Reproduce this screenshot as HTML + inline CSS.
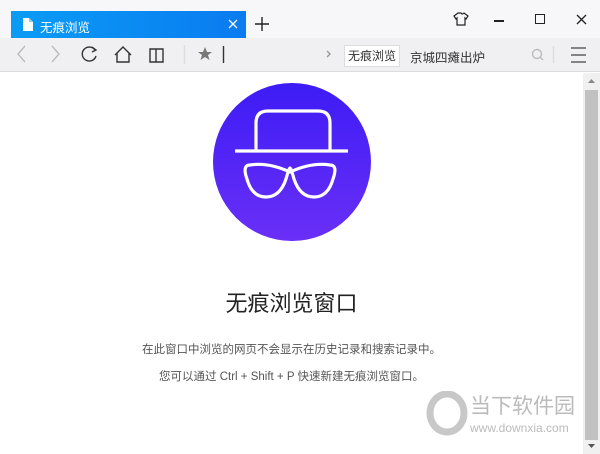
<!DOCTYPE html>
<html><head><meta charset="utf-8"><style>
*{margin:0;padding:0;box-sizing:border-box}
body{width:600px;height:454px;overflow:hidden;background:#fff;font-family:"Liberation Sans","Noto Sans CJK SC",sans-serif;position:relative}
.abs{position:absolute;white-space:nowrap}
</style></head><body>
<div class="abs" style="left:0;top:0;width:600px;height:38px;background:#f7f7f9"></div>
<div class="abs" style="left:11px;top:11px;width:235px;height:27px;background:linear-gradient(90deg,#0a9cf5,#0a7bf0)"></div>
<svg class="abs" style="left:22px;top:17px" width="12" height="15"><path d="M1 1h6l4 4v9H1z" fill="#fff"/><path d="M7 1v4h4" fill="#9cd" /></svg>
<div class="abs" style="left:40px;top:17px;color:#fff;font-size:12.5px">无痕浏览</div>
<svg class="abs" style="left:228px;top:19px" width="10" height="10"><path d="M1 1L9 9M9 1L1 9" stroke="#fff" stroke-width="1.3"/></svg>
<svg class="abs" style="left:255px;top:17px" width="14" height="14"><path d="M7 0V14M0 7H14" stroke="#222" stroke-width="1.4"/></svg>
<svg class="abs" style="left:453px;top:12px" width="16" height="14"><path d="M5 1L1 4l2 3 1-1v7h8V6l1 1 2-3-4-3q-2 2-3 0z" fill="none" stroke="#222" stroke-width="1.2"/></svg>
<div class="abs" style="left:494px;top:20px;width:10px;height:1.5px;background:#222"></div>
<div class="abs" style="left:535px;top:14px;width:10px;height:10px;border:1.5px solid #222"></div>
<svg class="abs" style="left:576px;top:14px" width="11" height="11"><path d="M1 1L10 10M10 1L1 10" stroke="#222" stroke-width="1.3"/></svg>
<div class="abs" style="left:0;top:38px;width:600px;height:34px;background:#f0f0f2;border-bottom:1px solid #ddd"></div>
<svg class="abs" style="left:0;top:38px" width="600" height="34" fill="none" stroke-width="1.4">
<path d="M25 8L18 16L25 24" stroke="#bbb"/><path d="M52 8L59 16L52 24" stroke="#bbb"/>
<path d="M95 12A7 7 0 1 0 96 18" stroke="#333"/><path d="M92 9l4 3-4 2" stroke="#333"/>
<path d="M115 17L123 9L131 17M117 15V24H129V15" stroke="#333"/>
<path d="M150 11h6v13h-6zM156 11h7v13h-7z" stroke="#333"/>
<line x1="184.5" y1="7" x2="184.5" y2="26" stroke="#ddd"/>
<path d="M205 9l2 5h5l-4 3 1.5 5-4.5-3-4.5 3 1.5-5-4-3h5z" fill="#777" stroke="none"/>
<line x1="223.5" y1="8" x2="223.5" y2="25" stroke="#333"/>
<path d="M327 13l3 3-3 3" stroke="#999"/>
<circle cx="537" cy="16" r="4.5" stroke="#bbb"/><path d="M540 19l3 3" stroke="#bbb"/>
<line x1="553.5" y1="8" x2="553.5" y2="25" stroke="#ddd"/>
<path d="M571 10h15M571 17h15M571 24h15" stroke="#444" stroke-width="1.2"/>
</svg>
<div class="abs" style="left:344px;top:45px;width:56px;height:22px;background:#fff;border:1px solid #ddd;font-size:12px;color:#333;line-height:20px;text-align:center">无痕浏览</div>
<div class="abs" style="left:410px;top:47px;font-size:12.5px;color:#333">京城四瘫出炉</div>
<div class="abs" style="left:583px;top:73px;width:17px;height:381px;background:#f0f0f0"></div>
<div class="abs" style="left:585px;top:90px;width:13px;height:350px;background:#c1c1c1"></div>
<svg class="abs" style="left:583px;top:75px" width="17" height="379"><path d="M5 8l3.5-4 3.5 4z" fill="#888"/><path d="M5 369l3.5 4 3.5-4z" fill="#555"/></svg>
<svg class="abs" style="left:213px;top:83px" width="160" height="160">
<defs><linearGradient id="g" x1="0" y1="0" x2="0" y2="1"><stop offset="0" stop-color="#3d1cf5"/><stop offset="1" stop-color="#6a2ff7"/></linearGradient></defs>
<circle cx="79" cy="79" r="79" fill="url(#g)"/>
<g fill="none" stroke="#fff" stroke-width="3.2">
<path d="M43 67V40q0-12 12-12h50q12 0 12 12V67"/>
<path d="M22 68H135"/>
<path d="M37 82q-8 0-3 14 5 18 19 18 14 0 20-18 3-11 4-11 1 0 4 11 6 18 20 18 14 0 19-18 5-14-3-14-18-3-40 7-22-10-40-7z"/>
</g></svg>
<div class="abs" style="left:0;width:583px;top:286px;text-align:center;font-size:22px;color:#222">无痕浏览窗口</div>
<div class="abs" style="left:0;width:583px;top:341px;text-align:center;font-size:11.5px;color:#555">在此窗口中浏览的网页不会显示在历史记录和搜索记录中。</div>
<div class="abs" style="left:0;width:583px;top:368px;text-align:center;font-size:11.5px;color:#555">您可以通过 Ctrl + Shift + P 快速新建无痕浏览窗口。</div>
<svg class="abs" style="left:425px;top:391px" width="45" height="45"><ellipse cx="22" cy="22" rx="17" ry="19" fill="none" stroke="#c8c8c8" stroke-width="7"/></svg>
<div class="abs" style="left:470px;top:390px;font-size:21px;color:#bbb;letter-spacing:0px">当下软件园</div>
<div class="abs" style="left:470px;top:421px;font-size:12px;color:#bbb">www.downxia.com</div>
</body></html>
